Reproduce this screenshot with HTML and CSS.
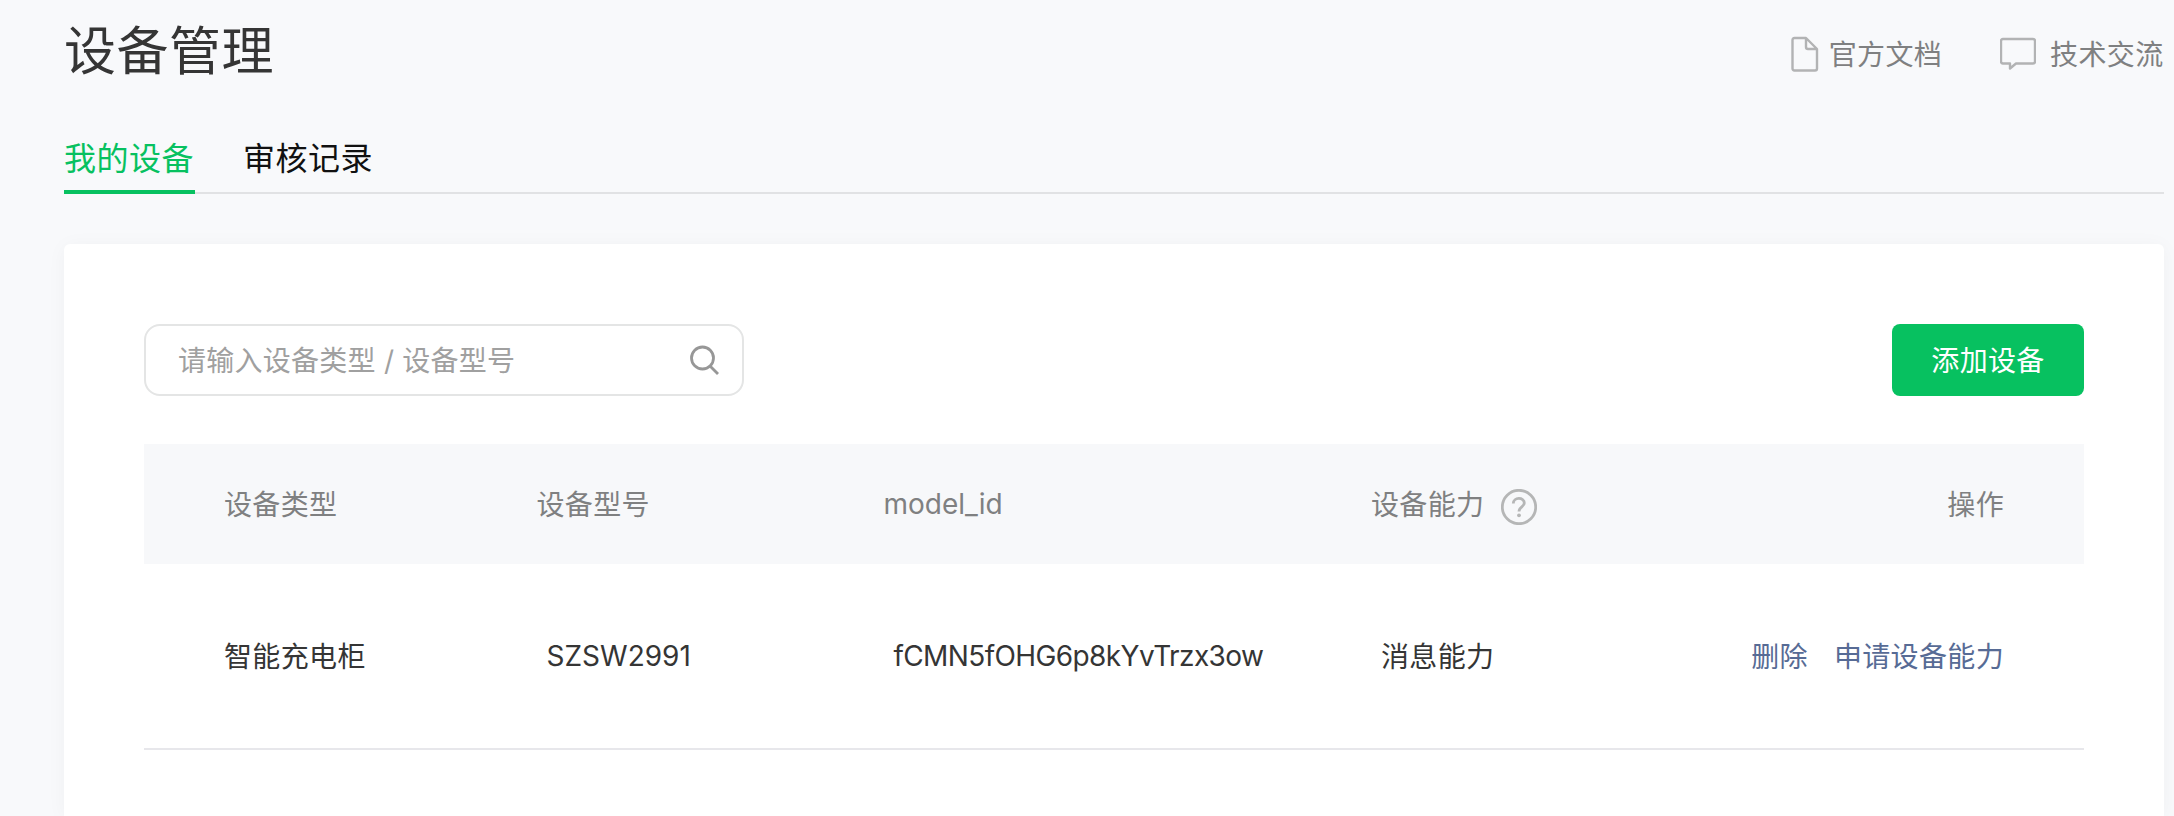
FILE: index.html
```html
<!DOCTYPE html>
<html lang="zh-CN">
<head>
    <meta charset="UTF-8">
    <title>设备管理</title>
    <link rel="stylesheet" href="styles.css">
</head>
<body>
  <div class="page">
    <header class="page-header">
      <h1 class="page-title">设备管理</h1>
      <nav class="links">
        <a class="link" href="#">
          <svg class="icon-doc" width="28" height="36" viewBox="0 0 28 36">
            <path d="M3.5 2H15L26 13V32.5Q26 34.5 24 34.5H3.5Q1.5 34.5 1.5 32.5V4Q1.5 2 3.5 2M15 2V11Q15 13 17 13H26" />
          </svg>
          <span>官方文档</span>
        </a>
        <a class="link" href="#">
          <svg class="icon-chat" width="36" height="36" viewBox="0 0 36 36">
            <path d="M3 3H33Q35 3 35 5V25.5Q35 27.5 33 27.5H16L10 32.5V27.5H3Q1 27.5 1 25.5V5Q1 3 3 3Z" />
          </svg>
          <span>技术交流</span>
        </a>
      </nav>
    </header>

    <div class="tabs">
      <a class="tab active" href="#">我的设备</a>
      <a class="tab" href="#">审核记录</a>
    </div>

    <div class="card">
      <div class="toolbar">
        <div class="search">
          <input class="search-input" type="text" placeholder="请输入设备类型 / 设备型号">
          <svg class="icon-search" width="32" height="32" viewBox="0 0 32 32">
            <circle cx="14.5" cy="14" r="11" />
            <path d="M22 22L30 30" />
          </svg>
        </div>
        <button class="btn">添加设备</button>
      </div>

      <div class="table">
        <div class="row head">
          <div class="cell">设备类型</div>
          <div class="cell">设备型号</div>
          <div class="cell latin">model_id</div>
          <div class="cell with-icon">
            <span>设备能力</span>
            <svg class="icon-help" width="36" height="36" viewBox="0 0 36 36">
              <circle cx="18" cy="18" r="16.7" />
              <path d="M12.3 14.5C12.3 7.8 23.3 7.8 23.3 14C23.3 17.8 18 18 18 22.5" />
              <circle class="point" cx="18" cy="26.3" r="1.9" />
            </svg>
          </div>
          <div class="cell actions">操作</div>
        </div>
        <div class="row body">
          <div class="cell">智能充电柜</div>
          <div class="cell indent latin">SZSW2991</div>
          <div class="cell indent latin model-id">fCMN5fOHG6p8kYvTrzx3ow</div>
          <div class="cell indent">消息能力</div>
          <div class="cell actions">
            <a href="#">删除</a>
            <a href="#">申请设备能力</a>
          </div>
        </div>
      </div>
    </div>
  </div>
</body>
</html>
```

FILE: styles.css
```css
* {
    box-sizing: border-box;
}

body {
    margin: 0;
    height: 816px;
    overflow: hidden;
    background: #f8f9fb;
    color: #353535;
    font-family: Inter, "Noto Sans CJK SC", sans-serif;
    font-size: 28px;
    letter-spacing: 0.35px;
}

a {
    text-decoration: none;
}

.page {
    padding: 0 10px 0 64px;
}

.page-header {
    display: flex;
    justify-content: space-between;
    height: 128px;
}

.page-title {
    margin: 0;
    font-size: 52px;
    font-weight: 400;
    line-height: 104px;
    letter-spacing: 0.5px;
}

.links {
    display: flex;
    gap: 58px;
    height: 108px;
    padding-right: 0.5px;
    align-items: center;
}

.link {
    display: flex;
    align-items: center;
    gap: 10px;
    color: #7f8081;
}

.link span {
    padding-bottom: 2px;
}

.link svg {
    fill: none;
    stroke: #b2b3b4;
    stroke-width: 2.4;
    stroke-linejoin: round;
}

.icon-chat {
    margin-right: 4px;
}

.tabs {
    display: flex;
    gap: 48px;
    height: 66px;
    border-bottom: 2px solid #e1e2e4;
    font-size: 32px;
    letter-spacing: 0.5px;
}

.tab {
    height: 66px;
    line-height: 62px;
    color: #111;
}

.tab.active {
    width: 131px;
    color: #07c160;
    border-bottom: 4px solid #07c160;
}

.card {
    height: 572px;
    margin-top: 50px;
    padding: 80px 80px 0;
    border-radius: 6px 6px 0 0;
    background: #fff;
    box-shadow: 0 2px 20px rgba(0, 0, 0, 0.04);
}

.toolbar {
    display: flex;
    justify-content: space-between;
    margin-bottom: 48px;
}

.search {
    display: flex;
    align-items: center;
    width: 600px;
    height: 72px;
    padding: 0 22px 0 32px;
    border: 2px solid #e4e5e5;
    border-radius: 16px;
}

.search-input {
    flex: 1;
    padding: 2px 0 0;
    border: none;
    outline: none;
    background: none;
    font: inherit;
    letter-spacing: 0.25px;
}

.search-input::placeholder {
    color: #a0a0a0;
}

.icon-search {
    fill: none;
    stroke: #979797;
    stroke-width: 2.8;
}

.btn {
    width: 192px;
    height: 72px;
    padding: 0 0 2px;
    border: none;
    border-radius: 8px;
    background: #07c160;
    color: #fff;
    font: inherit;
    letter-spacing: inherit;
}

.row {
    display: grid;
    grid-template-columns: 312.5px 347px 487.5px 1fr auto;
    align-items: center;
    padding: 0 80px;
}

.row.head {
    height: 120px;
    background: #f7f8fa;
    color: #7f8081;
}

.row.body {
    height: 186px;
    border-bottom: 2px solid #e7e7eb;
}

.cell {
    padding-bottom: 2px;
}

.indent {
    padding-left: 10px;
}

.latin {
    padding-bottom: 0;
    letter-spacing: 0;
}

.model-id {
    letter-spacing: -0.6px;
}

.with-icon {
    display: flex;
    align-items: center;
    gap: 17px;
}

.icon-help {
    margin-top: 8px;
    fill: none;
    stroke: #b5b6b6;
    stroke-width: 2.8;
}

.icon-help .point {
    fill: #b5b6b6;
    stroke: none;
}

.actions {
    display: flex;
    gap: 26px;
}

.actions a {
    color: #576b95;
}
```
